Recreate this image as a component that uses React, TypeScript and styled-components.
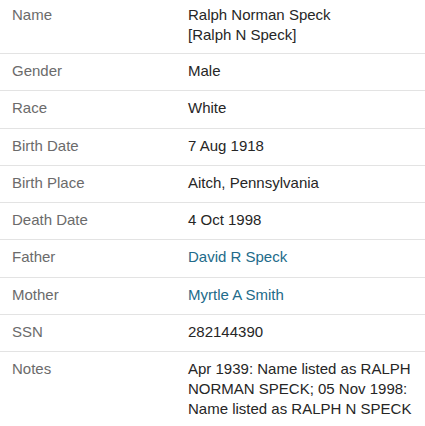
import React from "react";
import styled, { createGlobalStyle } from "styled-components";

const Global = createGlobalStyle`
  html, body { margin: 0; padding: 0; background: #ffffff; }
  body { font-family: "Liberation Sans", Arial, sans-serif; font-size: 15px; }
`;

const List = styled.dl`
  margin: 0;
  display: flex;
  flex-direction: column;
`;

const Row = styled.div<{ $first?: boolean; $last?: boolean }>`
  display: grid;
  grid-template-columns: 188px 1fr;
  padding-top: ${(p) => (p.$first ? "5px" : "7px")};
  padding-bottom: ${(p) => (p.$first ? "8px" : "9.25px")};
  border-bottom: ${(p) => (p.$last ? "none" : "1px solid #e3e3e3")};
  line-height: 20px;
`;

const Label = styled.dt`
  margin: 0;
  padding-left: 12px;
  color: #6b6b6b;
`;

const Value = styled.dd`
  margin: 0;
  padding-right: 10px;
  color: #262626;
`;

const Link = styled.a`
  color: #226b8a;
  text-decoration: none;
`;

type Item = { label: string; value: React.ReactNode };

const items: Item[] = [
  {
    label: "Name",
    value: (
      <>
        Ralph Norman Speck
        <br />
        [Ralph N Speck]
      </>
    ),
  },
  { label: "Gender", value: "Male" },
  { label: "Race", value: "White" },
  { label: "Birth Date", value: "7 Aug 1918" },
  { label: "Birth Place", value: "Aitch, Pennsylvania" },
  { label: "Death Date", value: "4 Oct 1998" },
  { label: "Father", value: <Link href="#">David R Speck</Link> },
  { label: "Mother", value: <Link href="#">Myrtle A Smith</Link> },
  { label: "SSN", value: "282144390" },
  {
    label: "Notes",
    value:
      "Apr 1939: Name listed as RALPH NORMAN SPECK; 05 Nov 1998: Name listed as RALPH N SPECK",
  },
];

export default function App() {
  return (
    <>
      <Global />
      <List>
        {items.map((it, i) => (
          <Row key={it.label} $first={i === 0} $last={i === items.length - 1}>
            <Label>{it.label}</Label>
            <Value>{it.value}</Value>
          </Row>
        ))}
      </List>
    </>
  );
}
